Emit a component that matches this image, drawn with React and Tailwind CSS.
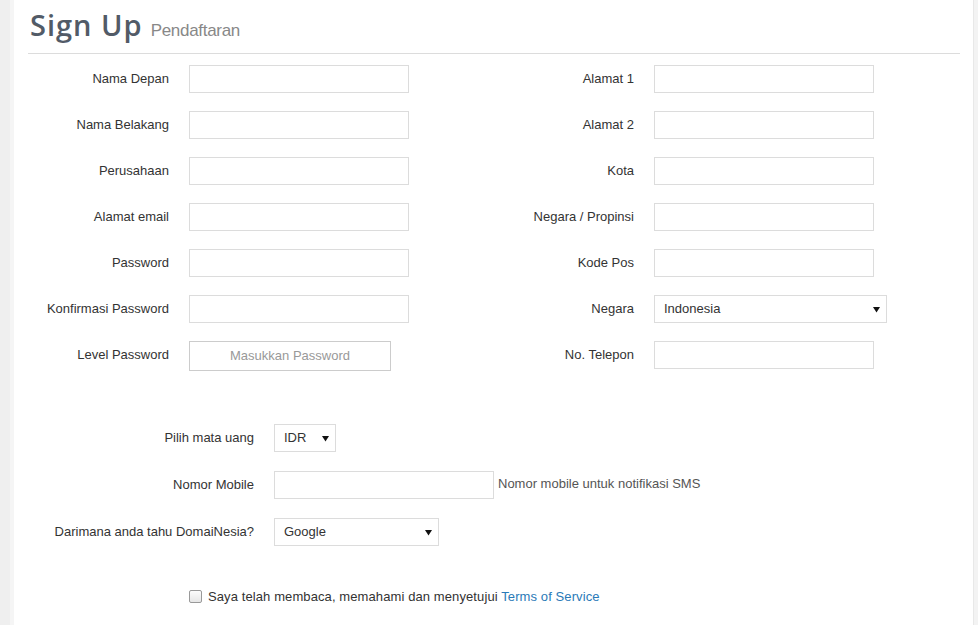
import React from "react";

const Arrow = () => (
  <svg width="7" height="7" viewBox="0 0 7 7" className="shrink-0">
    <path d="M0 1 L7 1 L3.5 6.5 Z" fill="#111" />
  </svg>
);

function Row({ label, children, labelW = "w-[155px]" }) {
  return (
    <div className="flex items-center h-[28px]">
      <div className={`${labelW} text-right text-[13px] text-[#333] shrink-0`}>{label}</div>
      <div className="ml-[20px] flex items-center">{children}</div>
    </div>
  );
}

const Input = ({ w = "w-[220px]" }) => (
  <div className={`${w} h-[28px] border border-[#dcdcdc] bg-white`} />
);

const Select = ({ w, text }) => (
  <div className={`${w} h-[28px] border border-[#dcdcdc] bg-white flex items-center justify-between pl-[9px] pr-[6px] text-[13px] text-[#333]`}>
    <span>{text}</span>
    <Arrow />
  </div>
);

export default function App() {
  const left = [
    "Nama Depan",
    "Nama Belakang",
    "Perusahaan",
    "Alamat email",
    "Password",
    "Konfirmasi Password",
  ];
  const right = ["Alamat 1", "Alamat 2", "Kota", "Negara / Propinsi", "Kode Pos"];
  return (
    <div
      className="w-[978px] h-[625px] bg-[#f0f0f0] flex overflow-hidden"
      style={{ fontFamily: '"Liberation Sans", Arial, sans-serif' }}
    >
      <div className="w-[10px] shrink-0 bg-[#efefef]" />
      <div className="w-[4px] shrink-0 bg-[#f5f5f5]" />
      <div className="w-[959px] bg-white shrink-0 flex flex-col">
        <div className="flex items-baseline ml-[16px] mt-[3px] h-[40px]">
          <span
            className="text-[29px] font-semibold text-[#525b67] tracking-[1px]"
            style={{ fontFamily: '"Open Sans", sans-serif' }}
          >
            Sign Up
          </span>
          <span className="ml-[8px] text-[17px] text-[#888] tracking-[-0.3px]">Pendaftaran</span>
        </div>
        <div className="ml-[14px] mr-[13px] mt-[10px] h-px bg-[#dcdcdc]" />
        <div className="flex mt-[11px]">
          <div className="w-[465px] flex flex-col gap-[18px]">
            {left.map((l) => (
              <Row key={l} label={l}>
                <Input />
              </Row>
            ))}
            <div className="flex items-center h-[30px]">
              <div className="w-[155px] text-right text-[13px] text-[#333] -mt-[2px]">Level Password</div>
              <div className="ml-[20px] w-[202px] h-[30px] border border-[#ccc] flex items-center justify-center text-[13px] text-[#999]">
                Masukkan Password
              </div>
            </div>
          </div>
          <div className="flex flex-col gap-[18px]">
            {right.map((l) => (
              <Row key={l} label={l}>
                <Input />
              </Row>
            ))}
            <Row label="Negara">
              <Select w="w-[233px]" text="Indonesia" />
            </Row>
            <Row label="No. Telepon">
              <Input />
            </Row>
          </div>
        </div>
        <div className="flex flex-col gap-[19px] mt-[53px]">
          <Row label="Pilih mata uang" labelW="w-[240px]">
            <Select w="w-[62px]" text="IDR" />
          </Row>
          <Row label="Nomor Mobile" labelW="w-[240px]">
            <Input />
            <span className="ml-[4px] text-[13px] text-[#555] -mt-[3px]">Nomor mobile untuk notifikasi SMS</span>
          </Row>
          <Row label="Darimana anda tahu DomaiNesia?" labelW="w-[240px]">
            <Select w="w-[165px]" text="Google" />
          </Row>
        </div>
        <div className="flex items-center ml-[175px] mt-[41px]">
          <div className="w-[13px] h-[13px] rounded-[2px] border border-[#999] bg-gradient-to-b from-[#fcfcfc] to-[#e6e6e6]" />
          <span className="ml-[6px] text-[13px] tracking-[0.1px] text-[#333]">
            Saya telah membaca, memahami dan menyetujui{" "}
            <span className="text-[#2a7ab8]">Terms of Service</span>
          </span>
        </div>
      </div>
      <div className="flex-1 bg-[#f3f3f3] border-l border-[#e8e8e8]" />
    </div>
  );
}
